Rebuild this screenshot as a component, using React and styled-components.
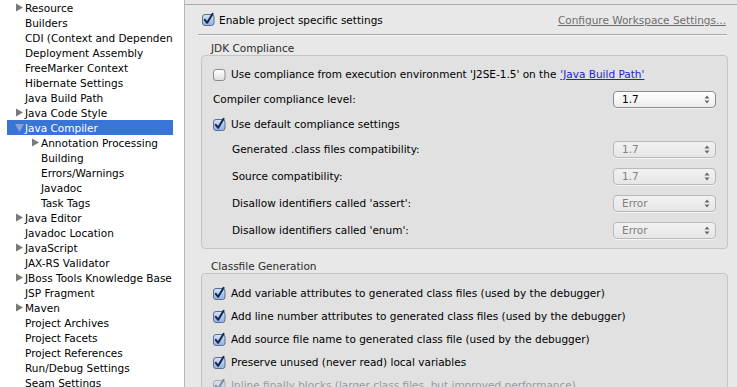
import React from 'react';
import styled, { createGlobalStyle } from 'styled-components';

const GlobalStyle = createGlobalStyle`
  html, body { margin: 0; padding: 0; }
  body {
    font-family: "DejaVu Sans", "Liberation Sans", sans-serif;
    font-size: 10.5px;
    color: #000;
  }
`;

const Window = styled.div`
  display: flex;
  width: 737px;
  height: 387px;
  overflow: hidden;
  background: #e8e8e8;
`;

// left tree
const Sidebar = styled.div`
  width: 184px;
  flex: none;
  background: #fff;
  border-right: 1px solid #b8b8b8;
`;

const Tree = styled.ul`
  list-style: none;
  margin: 0 0 0 7px;
  padding: 0;
  width: 166px;
  overflow: hidden;
`;

const TreeRow = styled.li`
  display: flex;
  align-items: center;
  height: 15px;
  padding-left: ${p => 9 + p.$level * 16}px;
  white-space: nowrap;
  background: ${p => (p.$selected ? '#3875d7' : 'transparent')};
  color: ${p => (p.$selected ? '#fff' : '#000')};
`;

const Twisty = styled.span`
  width: 9px;
  flex: none;
  display: flex;
  align-items: center;
`;

// right panel
const Content = styled.div`
  flex: 1;
  min-width: 0;
  padding-top: 4px;
`;

const Header = styled.div`
  border-top: 1px solid #a9a9a9;
  height: 29px;
  display: flex;
  align-items: center;
  justify-content: space-between;
  padding: 0 11px 0 17px;
`;

const Separator = styled.div`
  height: 1px;
  margin: 0 10px 0 13px;
  background: #a9a9a9;
  box-shadow: 0 1px 0 #f4f4f4;
`;

const WorkspaceLink = styled.a`
  color: #6e6e6e;
  text-decoration: underline;
  cursor: pointer;
`;

const Section = styled.div`
  margin: 0 9px 0 16px;
`;

const SectionTitle = styled.div`
  height: 14px;
  line-height: 14px;
  margin-top: ${p => p.$top}px;
  padding-left: 10px;
  color: #2b2b2b;
`;

const Group = styled.div`
  display: flex;
  flex-direction: column;
  gap: 5px;
  background: #e1e1e1;
  border: 1px solid #c4c4c4;
  border-radius: 4px;
  padding: ${p => p.$pad};
`;

const CheckRow = styled.label`
  display: flex;
  align-items: center;
  gap: ${p => p.$gap || 5}px;
  height: 18px;
  flex: none;
  white-space: nowrap;
  color: ${p => (p.$disabled ? '#9a9a9a' : '#000')};
`;

const FieldRow = styled.div`
  display: flex;
  align-items: center;
  justify-content: space-between;
  height: 22px;
  flex: none;
  padding-left: ${p => p.$indent || 0}px;
  white-space: nowrap;
`;

const BuildPathLink = styled.a`
  color: #2020d8;
  text-decoration: underline;
  margin-left: 4px;
`;

const Select = styled.div`
  width: 103px;
  height: 17px;
  box-sizing: border-box;
  display: flex;
  align-items: center;
  justify-content: space-between;
  padding: 0 5px 0 8px;
  border: 1px solid ${p => (p.$disabled ? '#b9b9b9' : '#8c8c8c')};
  border-radius: 4px;
  background: ${p =>
    p.$disabled
      ? 'linear-gradient(#f2f2f2, #e6e6e6)'
      : 'linear-gradient(#ffffff, #ececec)'};
  color: ${p => (p.$disabled ? '#808080' : '#000')};
  box-shadow: 0 1px 0 rgba(255,255,255,0.6);
`;

const Box = styled.span`
  width: 13px;
  height: 13px;
  flex: none;
  display: inline-flex;
  opacity: ${p => (p.$disabled ? 0.45 : 1)};
`;

const Checkbox = ({ checked, disabled }) => (
  <Box $disabled={disabled}>
    <svg width="13" height="13" viewBox="0 0 13 13" overflow="visible">
      <defs>
        <linearGradient id="cbOff" x1="0" y1="0" x2="0" y2="1">
          <stop offset="0" stopColor="#ffffff" />
          <stop offset="1" stopColor="#dedede" />
        </linearGradient>
        <linearGradient id="cbOn" x1="0" y1="0" x2="0" y2="1">
          <stop offset="0" stopColor="#d4e3f7" />
          <stop offset="1" stopColor="#8db2e4" />
        </linearGradient>
      </defs>
      <rect x="0.5" y="1.5" width="11.5" height="11" rx="2.5"
        fill={checked ? 'url(#cbOn)' : 'url(#cbOff)'}
        stroke={checked ? '#5b6f8e' : '#8a8a8a'} />
      {checked && (
        <path d="M2.8 6.8 L5.2 9.8 L10.6 0.8" fill="none" stroke="#14264a"
          strokeWidth="2" strokeLinecap="round" strokeLinejoin="round" />
      )}
    </svg>
  </Box>
);

const Arrows = () => (
  <svg width="6" height="9" viewBox="0 0 6 9">
    <path d="M3 0.5 L5.5 3.5 L0.5 3.5 Z M3 8.5 L5.5 5.5 L0.5 5.5 Z" fill="#6a6a6a" />
  </svg>
);

const RightArrow = () => (
  <svg width="7" height="9" viewBox="0 0 7 9">
    <path d="M0 0.5 L7 4.5 L0 8.5 Z" fill="#7a7a7a" />
  </svg>
);

const DownArrow = () => (
  <svg width="9" height="8" viewBox="0 0 9 8" style={{ marginLeft: -1 }}>
    <path d="M0 0 L9 0 L4.5 8 Z" fill="#8aa3cf" />
  </svg>
);

const tree = [
  { label: 'Resource', kids: true },
  { label: 'Builders' },
  { label: 'CDI (Context and Dependency Injection)' },
  { label: 'Deployment Assembly' },
  { label: 'FreeMarker Context' },
  { label: 'Hibernate Settings' },
  { label: 'Java Build Path' },
  { label: 'Java Code Style', kids: true },
  { label: 'Java Compiler', open: true, selected: true },
  { label: 'Annotation Processing', kids: true, level: 1 },
  { label: 'Building', level: 1 },
  { label: 'Errors/Warnings', level: 1 },
  { label: 'Javadoc', level: 1 },
  { label: 'Task Tags', level: 1 },
  { label: 'Java Editor', kids: true },
  { label: 'Javadoc Location' },
  { label: 'JavaScript', kids: true },
  { label: 'JAX-RS Validator' },
  { label: 'JBoss Tools Knowledge Base', kids: true },
  { label: 'JSP Fragment' },
  { label: 'Maven', kids: true },
  { label: 'Project Archives' },
  { label: 'Project Facets' },
  { label: 'Project References' },
  { label: 'Run/Debug Settings' },
  { label: 'Seam Settings' },
];

const compat = [
  ['Generated .class files compatibility:', '1.7'],
  ['Source compatibility:', '1.7'],
  ["Disallow identifiers called 'assert':", 'Error'],
  ["Disallow identifiers called 'enum':", 'Error'],
];

const classfile = [
  'Add variable attributes to generated class files (used by the debugger)',
  'Add line number attributes to generated class files (used by the debugger)',
  'Add source file name to generated class file (used by the debugger)',
  'Preserve unused (never read) local variables',
];

export default function App() {
  return (
    <>
      <GlobalStyle />
      <Window>
        <Sidebar>
          <Tree>
            {tree.map(item => (
              <TreeRow key={item.label} $level={item.level || 0} $selected={item.selected}>
                <Twisty>{item.open ? <DownArrow /> : item.kids ? <RightArrow /> : null}</Twisty>
                {item.label}
              </TreeRow>
            ))}
          </Tree>
        </Sidebar>

        <Content>
          <Header>
            <CheckRow $gap={4}>
              <Checkbox checked />
              Enable project specific settings
            </CheckRow>
            <WorkspaceLink>Configure Workspace Settings...</WorkspaceLink>
          </Header>
          <Separator />

          <Section>
            <SectionTitle $top={6}>JDK Compliance</SectionTitle>
            <Group $pad="9px 11px 7px 11px">
              <CheckRow>
                <Checkbox />
                <span>
                  Use compliance from execution environment 'J2SE-1.5' on the
                  <BuildPathLink>'Java Build Path'</BuildPathLink>
                </span>
              </CheckRow>
              <FieldRow>
                Compiler compliance level:
                <Select>1.7<Arrows /></Select>
              </FieldRow>
              <CheckRow>
                <Checkbox checked />
                Use default compliance settings
              </CheckRow>
              {compat.map(([label, value]) => (
                <FieldRow key={label} $indent={19}>
                  {label}
                  <Select $disabled>{value}<Arrows /></Select>
                </FieldRow>
              ))}
            </Group>

            <SectionTitle $top={10}>Classfile Generation</SectionTitle>
            <Group $pad="10px 11px 6px 11px">
              {classfile.map(label => (
                <CheckRow key={label}>
                  <Checkbox checked />
                  {label}
                </CheckRow>
              ))}
              <CheckRow $disabled>
                <Checkbox checked disabled />
                Inline finally blocks (larger class files, but improved performance)
              </CheckRow>
            </Group>
          </Section>
        </Content>
      </Window>
    </>
  );
}
